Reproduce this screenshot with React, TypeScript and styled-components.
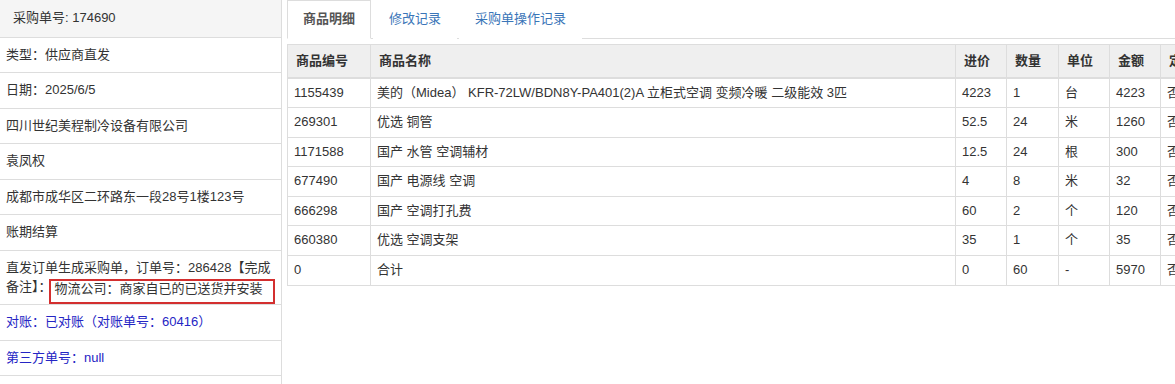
import React from "react";
import styled, { createGlobalStyle } from "styled-components";

const GlobalStyle = createGlobalStyle`
  html, body {
    margin: 0;
    padding: 0;
    background: #fff;
    overflow: hidden;
  }
  body {
    font-family: "Liberation Sans", Arial, "Noto Sans CJK SC", sans-serif;
    font-size: 13px;
    line-height: 1.42857;
    color: #333;
  }
  * { box-sizing: border-box; }
`;

const Page = styled.div`
  display: flex;
  height: 384px;
  width: 1175px;
  overflow: hidden;
`;

const Sidebar = styled.aside`
  flex: 0 0 282px;
  width: 282px;
  border-right: 1px solid #ddd;
  display: flex;
  flex-direction: column;
`;

const SideHeader = styled.div`
  background: #f5f5f5;
  padding: 9px 13px;
  border-bottom: 1px solid #ddd;
`;

const SideRow = styled.div<{ $blue?: boolean }>`
  padding: 8px 6px;
  border-bottom: 1px solid #ddd;
  color: ${(p) => (p.$blue ? "#2525c4" : "#333")};
`;

const Marked = styled.span`
  position: relative;
  top: 2px;
  border: 2px solid #d32f2f;
  padding: 0 10px 6px 4px;
  margin-left: -3px;
`;

const Main = styled.main`
  flex: 1 1 auto;
  min-width: 0;
  margin-left: 5px;
  overflow: hidden;
`;

const TabBar = styled.ul`
  display: flex;
  list-style: none;
  margin: 0;
  padding: 0;
  border-bottom: 1px solid #ddd;
`;

const Tab = styled.li<{ $active?: boolean }>`
  margin-right: 2px;
  margin-bottom: -1px;
  padding: 9px 15px 10px;
  line-height: 18px;
  border: 1px solid ${(p) => (p.$active ? "#ddd" : "transparent")};
  border-bottom-color: transparent;
  background: #fff;
  color: ${(p) => (p.$active ? "#555" : "#3a75b8")};
  font-weight: ${(p) => (p.$active ? "bold" : "normal")};
  cursor: pointer;
  white-space: nowrap;
`;

const Table = styled.table`
  margin-top: 5px;
  border-collapse: collapse;
  table-layout: fixed;
  width: 943px;
  border: 1px solid #ddd;
`;

const Th = styled.th`
  text-align: left;
  font-weight: bold;
  background: #efefef;
  padding: 7px 8px 6px;
  border: 1px solid #ddd;
  border-bottom: 2px solid #ddd;
  white-space: nowrap;
  overflow: hidden;
`;

const Td = styled.td`
  padding: 5px 6px;
  border: 1px solid #ddd;
  white-space: nowrap;
  overflow: hidden;
`;

const columns = [
  { title: "商品编号", width: 83 },
  { title: "商品名称", width: 585 },
  { title: "进价", width: 51 },
  { title: "数量", width: 52 },
  { title: "单位", width: 51 },
  { title: "金额", width: 51 },
  { title: "定制", width: 70 },
];

const rows = [
  ["1155439", "美的（Midea） KFR-72LW/BDN8Y-PA401(2)A 立柜式空调 变频冷暖 二级能效 3匹", "4223", "1", "台", "4223", "否"],
  ["269301", "优选 铜管", "52.5", "24", "米", "1260", "否"],
  ["1171588", "国产 水管 空调辅材", "12.5", "24", "根", "300", "否"],
  ["677490", "国产 电源线 空调", "4", "8", "米", "32", "否"],
  ["666298", "国产 空调打孔费", "60", "2", "个", "120", "否"],
  ["660380", "优选 空调支架", "35", "1", "个", "35", "否"],
  ["0", "合计", "0", "60", "-", "5970", "否"],
];

export default function App() {
  return (
    <>
      <GlobalStyle />
      <Page>
        <Sidebar>
          <SideHeader>采购单号: 174690</SideHeader>
          <SideRow>类型：供应商直发</SideRow>
          <SideRow>日期：2025/6/5</SideRow>
          <SideRow>四川世纪美程制冷设备有限公司</SideRow>
          <SideRow>袁凤权</SideRow>
          <SideRow>成都市成华区二环路东一段28号1楼123号</SideRow>
          <SideRow>账期结算</SideRow>
          <SideRow>
            直发订单生成采购单，订单号：286428【完成备注】：
            <Marked>物流公司：商家自已的已送货并安装</Marked>
          </SideRow>
          <SideRow $blue>对账：已对账（对账单号：60416）</SideRow>
          <SideRow $blue>第三方单号：null</SideRow>
        </Sidebar>
        <Main>
          <TabBar>
            <Tab $active>商品明细</Tab>
            <Tab>修改记录</Tab>
            <Tab>采购单操作记录</Tab>
          </TabBar>
          <Table>
            <colgroup>
              {columns.map((c) => (
                <col key={c.title} style={{ width: c.width }} />
              ))}
            </colgroup>
            <thead>
              <tr>
                {columns.map((c) => (
                  <Th key={c.title}>{c.title}</Th>
                ))}
              </tr>
            </thead>
            <tbody>
              {rows.map((r, i) => (
                <tr key={i}>
                  {r.map((cell, j) => (
                    <Td key={j}>{cell}</Td>
                  ))}
                </tr>
              ))}
            </tbody>
          </Table>
        </Main>
      </Page>
    </>
  );
}
